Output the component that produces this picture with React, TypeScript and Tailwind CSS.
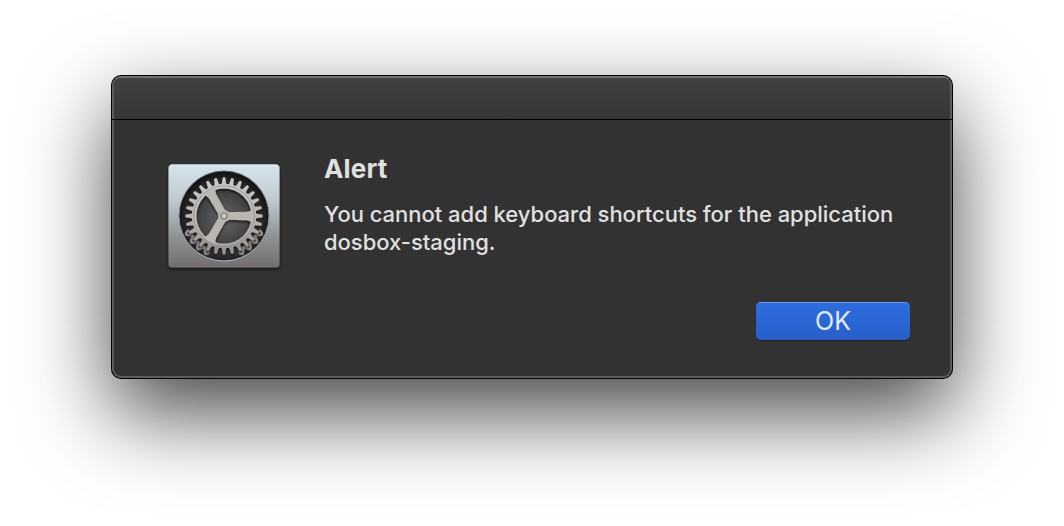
const polar = (cx: number, cy: number, r: number, a: number) =>
  `${(cx + r * Math.cos(a)).toFixed(2)} ${(cy + r * Math.sin(a)).toFixed(2)}`;

const gearPath = (cx: number, cy: number, n: number, root: number, tip: number) => {
  const step = (Math.PI * 2) / n;
  let d = "";
  for (let i = 0; i < n; i++) {
    const a = i * step;
    d += `${i ? "L" : "M"}${polar(cx, cy, root, a - step * 0.3)}L${polar(cx, cy, tip - 0.8, a - step * 0.17)}L${polar(cx, cy, tip, a - step * 0.1)}L${polar(cx, cy, tip, a + step * 0.1)}L${polar(cx, cy, tip - 0.8, a + step * 0.17)}L${polar(cx, cy, root, a + step * 0.3)}`;
  }
  return d + "Z";
};

const wavePath = (from: number, to: number) => {
  const points: string[] = [];
  for (let deg = from; deg <= to; deg += 1) {
    const a = (deg * Math.PI) / 180;
    points.push(polar(224, 216, 39.4 + 2.7 * Math.cos(28 * a), a));
  }
  return "M" + points.join("L");
};

const spoke = "M0 -3.8 L23 -4.2 Q26 -4.6 29 -7 L29 7 Q26 4.6 23 4.2 L0 3.8 Z";

function PreferencesIcon() {
  return (
    <svg className="h-[112px] w-[120px] shrink-0" viewBox="164 160 120 112" aria-hidden="true">
      <defs>
        <linearGradient id="tile" x1="0" y1="0" x2="0" y2="1">
          <stop offset="0" stopColor="#d5e5ed" />
          <stop offset="0.35" stopColor="#bfc9cd" />
          <stop offset="0.7" stopColor="#8f9293" />
          <stop offset="1" stopColor="#716e6d" />
        </linearGradient>
        <linearGradient id="rim" x1="0" y1="0" x2="0" y2="1">
          <stop offset="0" stopColor="#55606a" />
          <stop offset="0.5" stopColor="#8292a2" />
          <stop offset="1" stopColor="#a9bdd4" />
        </linearGradient>
        <radialGradient id="well" cx="224" cy="219" r="45" gradientUnits="userSpaceOnUse">
          <stop offset="0" stopColor="#666463" />
          <stop offset="0.55" stopColor="#444343" />
          <stop offset="0.82" stopColor="#302f2f" />
          <stop offset="1" stopColor="#141414" />
        </radialGradient>
        <linearGradient id="metal" x1="0" y1="177" x2="0" y2="256" gradientUnits="userSpaceOnUse">
          <stop offset="0" stopColor="#c8c8c4" />
          <stop offset="0.5" stopColor="#b9b5b1" />
          <stop offset="1" stopColor="#918c88" />
        </linearGradient>
        <filter id="drop" x="-20%" y="-20%" width="140%" height="140%">
          <feDropShadow dx="0" dy="1.5" stdDeviation="1.4" floodColor="#000" floodOpacity="0.75" />
        </filter>
      </defs>
      <rect x="168.5" y="164.5" width="111" height="103" rx="3.5" fill="url(#tile)" filter="url(#drop)" />
      <path d="M171 165H277" stroke="#eef6fa" strokeWidth="1" opacity="0.7" />
      <circle cx="224" cy="216" r="45" fill="url(#well)" stroke="url(#rim)" strokeWidth="1" />
      <g fill="none" strokeLinejoin="round" strokeLinecap="round" stroke="#8e8a86" strokeWidth="2.6">
        <path d={wavePath(113, 158)} />
        <path d={wavePath(22, 67)} />
      </g>
      <g filter="url(#drop)">
        <path
          d={`${gearPath(224, 216, 28, 32.2, 38.7)}M196.5 216a27.5 27.5 0 1 0 55 0a27.5 27.5 0 1 0 -55 0Z`}
          fillRule="evenodd"
          fill="url(#metal)"
        />
        {[0, 120, 240].map((a) => (
          <path key={a} d={spoke} transform={`translate(224 216) rotate(${a})`} fill="#bab7b3" />
        ))}
        <circle cx="224" cy="216" r="6" fill="#bab7b3" />
      </g>
      <circle cx="224" cy="216" r="30" fill="none" stroke="#7d7975" strokeWidth="0.7" />
      <circle cx="224" cy="216" r="29.3" fill="none" stroke="#d3d1ce" strokeWidth="0.5" />
      <circle cx="224" cy="216" r="3.5" fill="#a5a4a2" stroke="#73716f" strokeWidth="0.8" />
      <circle cx="224" cy="216" r="1.8" fill="#d3d3d2" />
    </svg>
  );
}

export default function App() {
  return (
    <main className="h-[526px] w-[1064px] overflow-hidden bg-white px-[111px] pt-[75px] font-['Inter','Liberation_Sans',sans-serif]">
      <section
        role="alertdialog"
        className="flex h-[304px] w-[842px] flex-col rounded-[10px] bg-black p-px shadow-[0_34px_86px_rgba(0,0,0,0.73)]"
      >
        <header className="h-[43px] shrink-0 rounded-t-[9px] border-x-2 border-t-2 border-x-[#5d5d5d] border-t-[#707070] bg-linear-to-b from-[#414141] to-[#363636] bg-clip-padding" />
        <div className="mt-px flex-1 rounded-b-[9px] border-x-2 border-b-2 border-[#5d5d5d] bg-[#323232]">
          <div className="flex pt-[40px] pl-[50px]">
            <PreferencesIcon />
            <div className="ml-[40px] text-[#e0e0e0]">
              <h1 className="-mt-[7px] text-[26px] leading-[32px] font-bold tracking-[0.2px]">Alert</h1>
              <p className="mt-[15px] w-[590px] text-[22px] leading-[28px] font-[450] tracking-[-0.02px]">
                You cannot add keyboard shortcuts for the application
                <br />
                dosbox-staging.
              </p>
            </div>
          </div>
          <footer className="mt-[30px] flex justify-end pr-[40px]">
            <button className="h-[38px] w-[154px] rounded-[5px] border-t border-[#6697e8] bg-linear-to-b from-[#2d6de0] to-[#285fc9] pb-[2px] text-[25px] leading-[34px] text-[#e3ebfa] shadow-[0_1px_1px_rgba(0,0,0,0.4)]">
              OK
            </button>
          </footer>
        </div>
      </section>
    </main>
  );
}
